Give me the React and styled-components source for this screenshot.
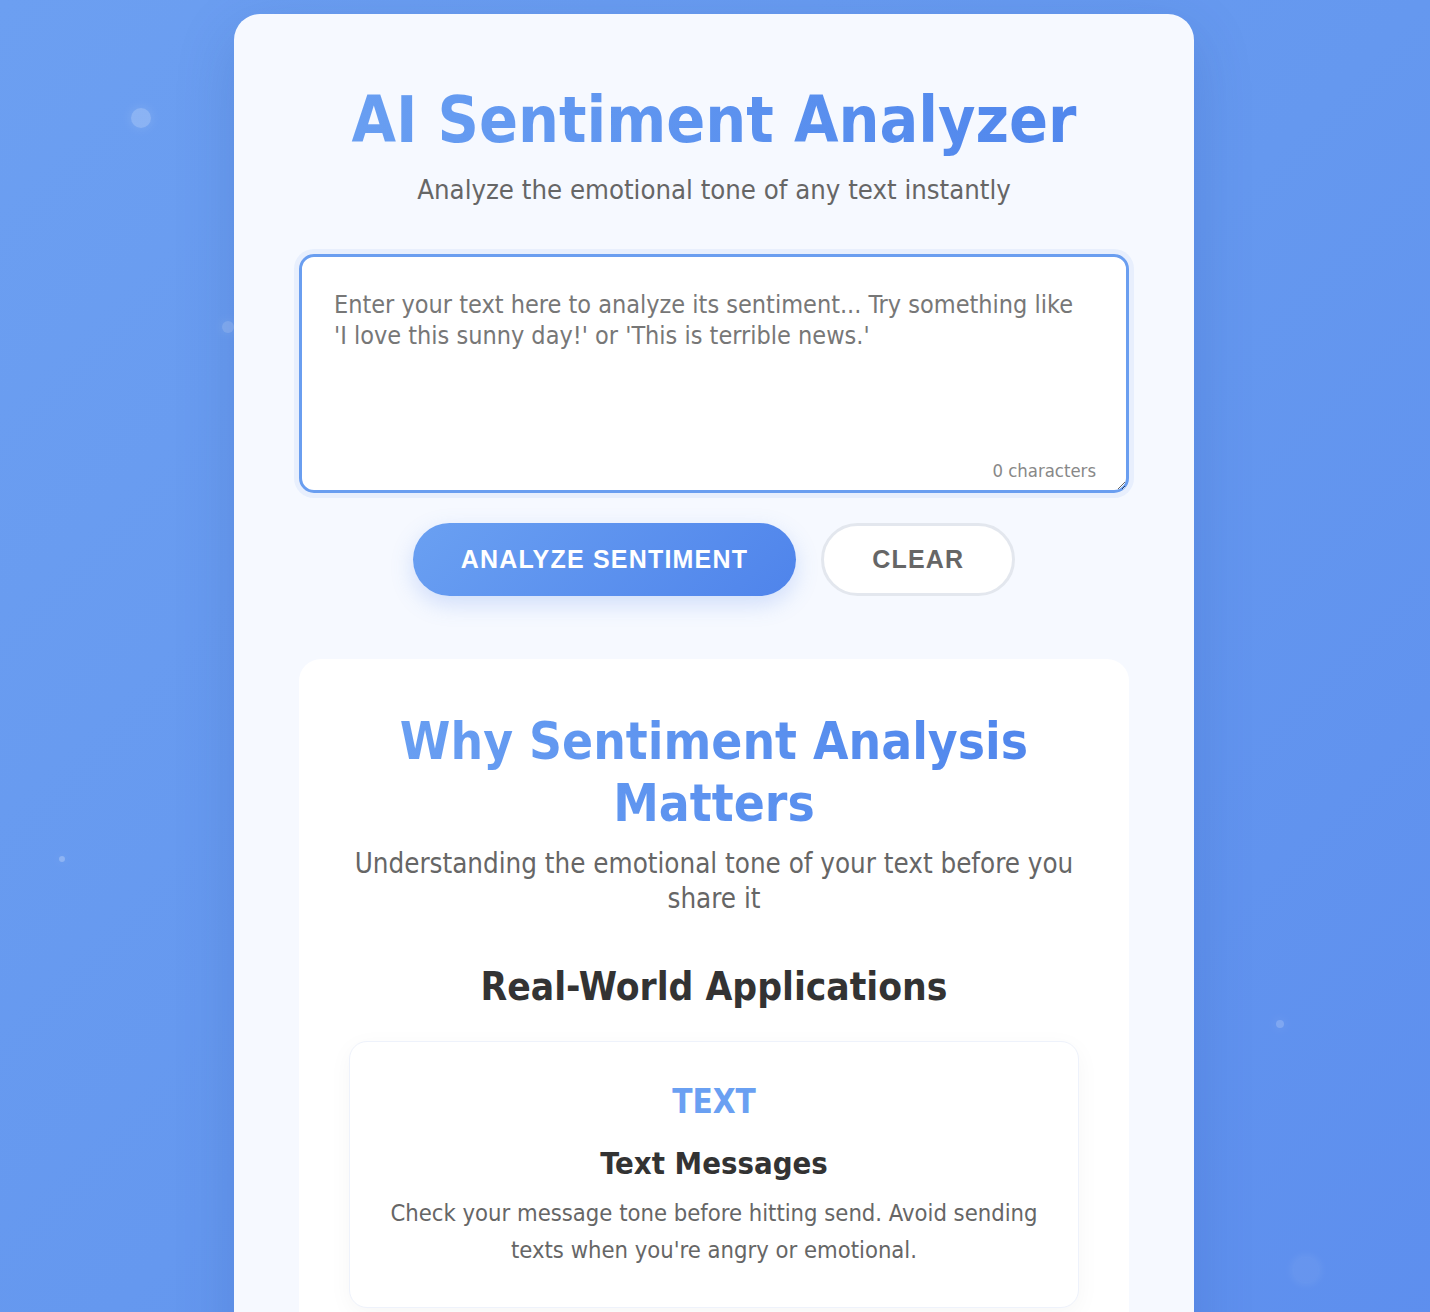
import React, { useState } from "react";
import styled, { createGlobalStyle } from "styled-components";

// Global

const GlobalStyle = createGlobalStyle`
	html, body {
		margin: 0;
		padding: 0;
	}
	body {
		min-height: 100vh;
		background: linear-gradient(135deg, #6c9ff1 0%, #6598ef 50%, #5d8eee 100%);
		font-family: "DejaVu Sans Condensed", "DejaVu Sans", Verdana, sans-serif;
		font-stretch: condensed;
		overflow: hidden;
	}
	* {
		box-sizing: border-box;
	}
`;

// Styled Components

const Page = styled.div`
	position: relative;
	min-height: 1312px;
	padding-top: 14px;
`;

const Particle = styled.span`
	position: absolute;
	border-radius: 50%;
	background: rgba(255, 255, 255, ${(p) => p.$alpha});
	box-shadow: 0 0 12px rgba(255, 255, 255, 0.15);
`;

const Card = styled.main`
	position: relative;
	width: 960px;
	margin: 0 auto;
	transform: translateX(-1px);
	background: #f6f9ff;
	border-radius: 26px;
	padding: 68px 65px 0;
	box-shadow: 0 20px 60px rgba(30, 60, 140, 0.18);
	min-height: 1400px;
`;

const Title = styled.h1`
	margin: 0;
	text-align: center;
	font-size: 64px;
	line-height: 76px;
	font-weight: 700;
	background: linear-gradient(90deg, #6aa0f2, #4f85ec);
	-webkit-background-clip: text;
	background-clip: text;
	color: transparent;
`;

const Subtitle = styled.p`
	margin: 16px 0 0;
	text-align: center;
	font-size: 27.3px;
	line-height: 32px;
	color: #666;
`;

const InputWrap = styled.div`
	position: relative;
	margin-top: 48px;
`;

const TextArea = styled.textarea`
	display: block;
	width: 100%;
	height: 239px;
	padding: 32px 46px 32px 32px;
	border: 3px solid #6a9ef0;
	border-radius: 15px;
	box-shadow: 0 0 0 5px rgba(106, 158, 240, 0.1);
	background: #fff;
	font-family: inherit;
	font-stretch: condensed;
	font-size: 25px;
	line-height: 31px;
	color: #333;
	outline: none;
	resize: vertical;

	&::placeholder {
		color: #777;
	}
`;

const CharCount = styled.span`
	position: absolute;
	right: 33px;
	bottom: 12px;
	font-size: 18.4px;
	color: #888;
`;

const ButtonRow = styled.div`
	display: flex;
	justify-content: center;
	gap: 25px;
	margin-top: 30px;
`;

const Button = styled.button`
	height: 73px;
	padding: 0 48px;
	border-radius: 40px;
	font-family: "Liberation Sans", Arial, sans-serif;
	font-weight: 700;
	font-size: 25px;
	letter-spacing: 1.2px;
	text-transform: uppercase;
	cursor: pointer;
	border: ${(p) => (p.$primary ? "none" : "3px solid #e3e7ee")};
	color: ${(p) => (p.$primary ? "#fff" : "#666")};
	background: ${(p) =>
		p.$primary ? "linear-gradient(135deg, #6aa0f2, #4f84eb)" : "#fff"};
	box-shadow: ${(p) =>
		p.$primary ? "0 8px 22px rgba(90, 140, 236, 0.25)" : "none"};
`;

const InfoSection = styled.section`
	margin-top: 63px;
	background: #fff;
	border-radius: 22px;
	padding: 52px 50px 40px;
	text-align: center;
`;

const InfoTitle = styled.h2`
	margin: 0;
	font-size: 51px;
	line-height: 62px;
	font-weight: 700;
	background: linear-gradient(90deg, #6aa0f2, #4f85ec);
	-webkit-background-clip: text;
	background-clip: text;
	color: transparent;
`;

const InfoLead = styled.p`
	margin: 11px auto 0;
	max-width: 730px;
	font-size: 27.5px;
	line-height: 35px;
	color: #666;
`;

const SectionHeading = styled.h3`
	margin: 46px 0 0;
	font-size: 38.6px;
	line-height: 50px;
	color: #333;
`;

const AppCard = styled.div`
	margin-top: 29px;
	background: #fff;
	border: 1px solid #eef2fb;
	border-radius: 18px;
	padding: 40px 30px 38px;
	box-shadow: 0 6px 24px rgba(0, 0, 0, 0.04);
`;

const AppTag = styled.div`
	font-size: 33px;
	line-height: 40px;
	font-weight: 700;
	color: #6aa0f2;
`;

const AppName = styled.h4`
	margin: 21px 0 0;
	font-size: 30.8px;
	line-height: 40px;
	color: #333;
`;

const AppText = styled.p`
	margin: 12px 0 0;
	font-size: 23.6px;
	line-height: 37px;
	color: #666;
`;

const particles = [
	{ x: 141, y: 118, s: 20, a: 0.22 },
	{ x: 228, y: 327, s: 12, a: 0.18 },
	{ x: 62, y: 859, s: 6, a: 0.25 },
	{ x: 1280, y: 1024, s: 8, a: 0.2 },
	{ x: 1306, y: 1270, s: 24, a: 0.05 },
];

const App = () => {
	const [text, setText] = useState("");

	return (
		<Page>
			<GlobalStyle />
			{particles.map((p, i) => (
				<Particle
					key={i}
					$alpha={p.a}
					style={{
						left: p.x - p.s / 2,
						top: p.y - p.s / 2,
						width: p.s,
						height: p.s,
					}}
				/>
			))}
			<Card>
				<Title>AI Sentiment Analyzer</Title>
				<Subtitle>Analyze the emotional tone of any text instantly</Subtitle>

				<InputWrap>
					<TextArea
						value={text}
						onChange={(e) => setText(e.target.value)}
						placeholder="Enter your text here to analyze its sentiment... Try something like 'I love this sunny day!' or 'This is terrible news.'"
					/>
					<CharCount>{text.length} characters</CharCount>
				</InputWrap>

				<ButtonRow>
					<Button $primary>Analyze Sentiment</Button>
					<Button onClick={() => setText("")}>Clear</Button>
				</ButtonRow>

				<InfoSection>
					<InfoTitle>Why Sentiment Analysis Matters</InfoTitle>
					<InfoLead>
						Understanding the emotional tone of your text before you share it
					</InfoLead>
					<SectionHeading>Real-World Applications</SectionHeading>
					<AppCard>
						<AppTag>TEXT</AppTag>
						<AppName>Text Messages</AppName>
						<AppText>
							Check your message tone before hitting send. Avoid sending texts
							when you're angry or emotional.
						</AppText>
					</AppCard>
				</InfoSection>
			</Card>
		</Page>
	);
};

export default App;
